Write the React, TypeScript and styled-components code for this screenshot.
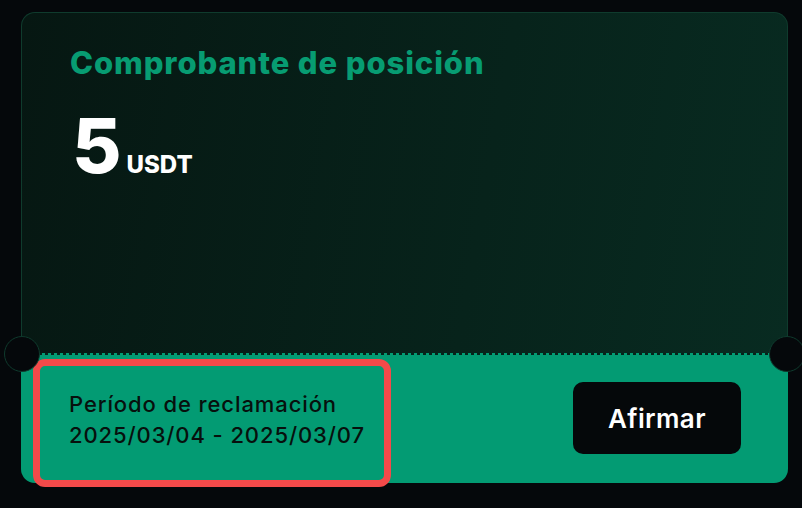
import React from "react";
import { styled, createGlobalStyle } from "styled-components";

const GlobalStyle = createGlobalStyle`
  html, body {
    margin: 0;
    padding: 0;
    background: #05080b;
  }
  body {
    font-family: Inter, "Noto Sans", sans-serif;
  }
`;

export default function App() {
  return (
    <>
      <GlobalStyle />
      <Page>
        <Ticket>
          <Notch $side="left" />
          <Notch $side="right" />
          <Stub>
            <Title>Comprobante de posición</Title>
            <Amount>
              <Value>5</Value>
              <Unit>USDT</Unit>
            </Amount>
          </Stub>
          <Footer>
            <Period>
              <PeriodLabel>Período de reclamación</PeriodLabel>
              <PeriodLabel>2025/03/04 - 2025/03/07</PeriodLabel>
            </Period>
            <ConfirmButton>Afirmar</ConfirmButton>
          </Footer>
        </Ticket>
      </Page>
    </>
  );
}

const Page = styled.div`
  padding: 12px 14px 25px 21px;
`;

const Ticket = styled.div`
  position: relative;
  width: 767px;
  display: flex;
  flex-direction: column;
`;

const Notch = styled.div<{ $side: "left" | "right" }>`
  position: absolute;
  top: 324px;
  ${(p) => (p.$side === "left" ? "left: -17px;" : "right: -17px;")}
  width: 34px;
  height: 34px;
  border-radius: 50%;
  background: #05080b;
  border: 1px solid #0f3a2d;
  z-index: 2;
`;

const Stub = styled.div`
  height: 341px;
  box-sizing: border-box;
  padding: 29px 48px;
  border: 1px solid #0f3b2d;
  border-bottom: none;
  border-radius: 14px 14px 0 0;
  background: linear-gradient(100deg, #061712 0%, #07231b 60%, #082b21 100%);
`;

const Title = styled.h2`
  margin: 0;
  font-size: 31px;
  font-weight: 800;
  letter-spacing: 0.9px;
  color: #079c72;
  line-height: 42px;
`;

const Amount = styled.div`
  display: flex;
  align-items: baseline;
  gap: 5px;
  margin-top: 21px;
  color: #ffffff;
`;

const Value = styled.span`
  font-size: 76px;
  font-weight: 800;
  line-height: 80px;
  margin-left: 2px;
`;

const Unit = styled.span`
  font-size: 24px;
  font-weight: 800;
`;

const Footer = styled.div`
  position: relative;
  height: 130px;
  box-sizing: border-box;
  display: flex;
  align-items: center;
  justify-content: space-between;
  padding: 0 47px 0 12px;
  background: #039b73;
  border-radius: 0 0 14px 14px;

  &::before {
    content: "";
    position: absolute;
    left: 0;
    right: 0;
    top: 0;
    height: 2px;
    background: repeating-linear-gradient(
      90deg,
      #06221a 0 3px,
      transparent 3px 6px
    );
  }
`;

const Period = styled.div`
  align-self: flex-start;
  margin-top: 6px;
  width: 358px;
  height: 128px;
  box-sizing: border-box;
  border: 7px solid #f34a4a;
  border-radius: 12px;
  padding: 0 0 6px 29px;
  display: flex;
  flex-direction: column;
  justify-content: center;
`;

const PeriodLabel = styled.div`
  font-size: 22px;
  font-weight: 500;
  letter-spacing: 0.9px;
  line-height: 31px;
  color: #07100d;
`;

const ConfirmButton = styled.button`
  width: 168px;
  height: 72px;
  border: none;
  border-radius: 10px;
  background: #05080a;
  color: #ffffff;
  font-family: Inter, "Noto Sans", sans-serif;
  font-size: 26px;
  font-weight: 600;
  letter-spacing: 0.4px;
  cursor: pointer;
`;
